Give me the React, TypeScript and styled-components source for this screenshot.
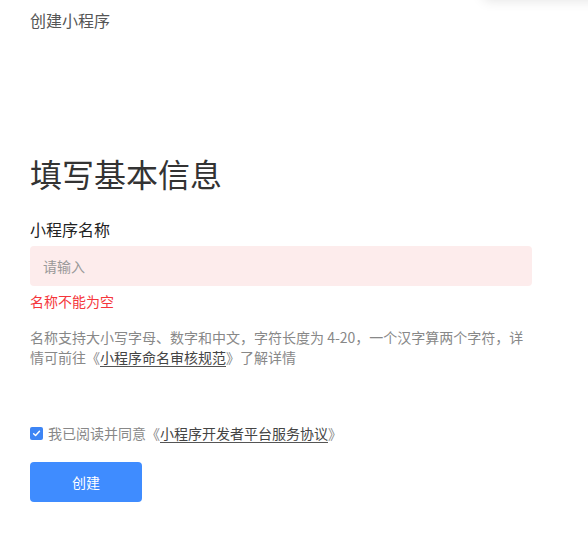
import styled, { createGlobalStyle } from "styled-components"

const GlobalStyle = createGlobalStyle`
  html, body {
    margin: 0;
    padding: 0;
    background: #fff;
    font-family: "Noto Sans CJK SC", "Noto Sans", sans-serif;
  }
`

const Page = styled.div`
  position: relative;
  width: 588px;
  height: 553px;
  overflow: hidden;
  padding: 0 30px;
  box-sizing: border-box;
`

const TopShadow = styled.div`
  position: absolute;
  top: -40px;
  left: 484px;
  width: 140px;
  height: 40px;
  background: #fff;
  box-shadow: 0 0 12px rgba(0, 0, 0, 0.12);
`

const Breadcrumb = styled.div`
  padding-top: 9px;
  font-size: 16px;
  line-height: 22px;
  color: #555;
`

const Title = styled.h1`
  margin: 120px 0 0;
  font-size: 32px;
  font-weight: 400;
  line-height: 44px;
  color: #333;
`

const Label = styled.div`
  margin-top: 22px;
  font-size: 16px;
  line-height: 24px;
  color: #222;
`

const Input = styled.input`
  display: block;
  box-sizing: border-box;
  width: 502px;
  height: 40px;
  margin-top: 5px;
  padding: 0 13px;
  border: none;
  border-radius: 4px;
  background: #fdecec;
  font-family: inherit;
  font-size: 14px;
  outline: none;

  &::placeholder {
    color: #999;
  }
`

const ErrorText = styled.div`
  margin-top: 5px;
  font-size: 14px;
  line-height: 20px;
  color: #f5363b;
`

const Hint = styled.p`
  margin: 16px 0 0;
  width: 502px;
  font-size: 14px;
  line-height: 20px;
  color: #888;
`

const Link = styled.a`
  color: #444;
  text-decoration: underline;
  text-underline-offset: 3px;
  text-decoration-color: #555;
`

const AgreeRow = styled.label`
  display: flex;
  align-items: center;
  gap: 5px;
  margin-top: 56px;
  font-size: 14px;
  line-height: 20px;
  color: #888;
`

const Check = styled.span`
  display: inline-flex;
  align-items: center;
  justify-content: center;
  width: 13px;
  height: 13px;
  border-radius: 2px;
  background: #3d85f5;
`

const Button = styled.button`
  display: block;
  margin-top: 19px;
  width: 112px;
  height: 40px;
  border: none;
  border-radius: 4px;
  background: #3f8cff;
  color: #fff;
  font-family: inherit;
  font-size: 14px;
  cursor: pointer;
`

export default function App() {
  return (
    <>
      <GlobalStyle />
      <Page>
        <TopShadow />
        <Breadcrumb>创建小程序</Breadcrumb>
        <Title>填写基本信息</Title>
        <Label>小程序名称</Label>
        <Input placeholder="请输入" />
        <ErrorText>名称不能为空</ErrorText>
        <Hint>
          名称支持大小写字母、数字和中文，字符长度为 4-20，一个汉字算两个字符，详情可前往《<Link>小程序命名审核规范</Link>》了解详情
        </Hint>
        <AgreeRow>
          <Check>
            <svg width="9" height="9" viewBox="0 0 10 10">
              <path d="M1.8 5.2 L4 7.3 L8.3 2.6" fill="none" stroke="#fff" strokeWidth="1.6" strokeLinecap="round" strokeLinejoin="round" />
            </svg>
          </Check>
          <span>
            我已阅读并同意《<Link>小程序开发者平台服务协议</Link>》
          </span>
        </AgreeRow>
        <Button>创建</Button>
      </Page>
    </>
  )
}
